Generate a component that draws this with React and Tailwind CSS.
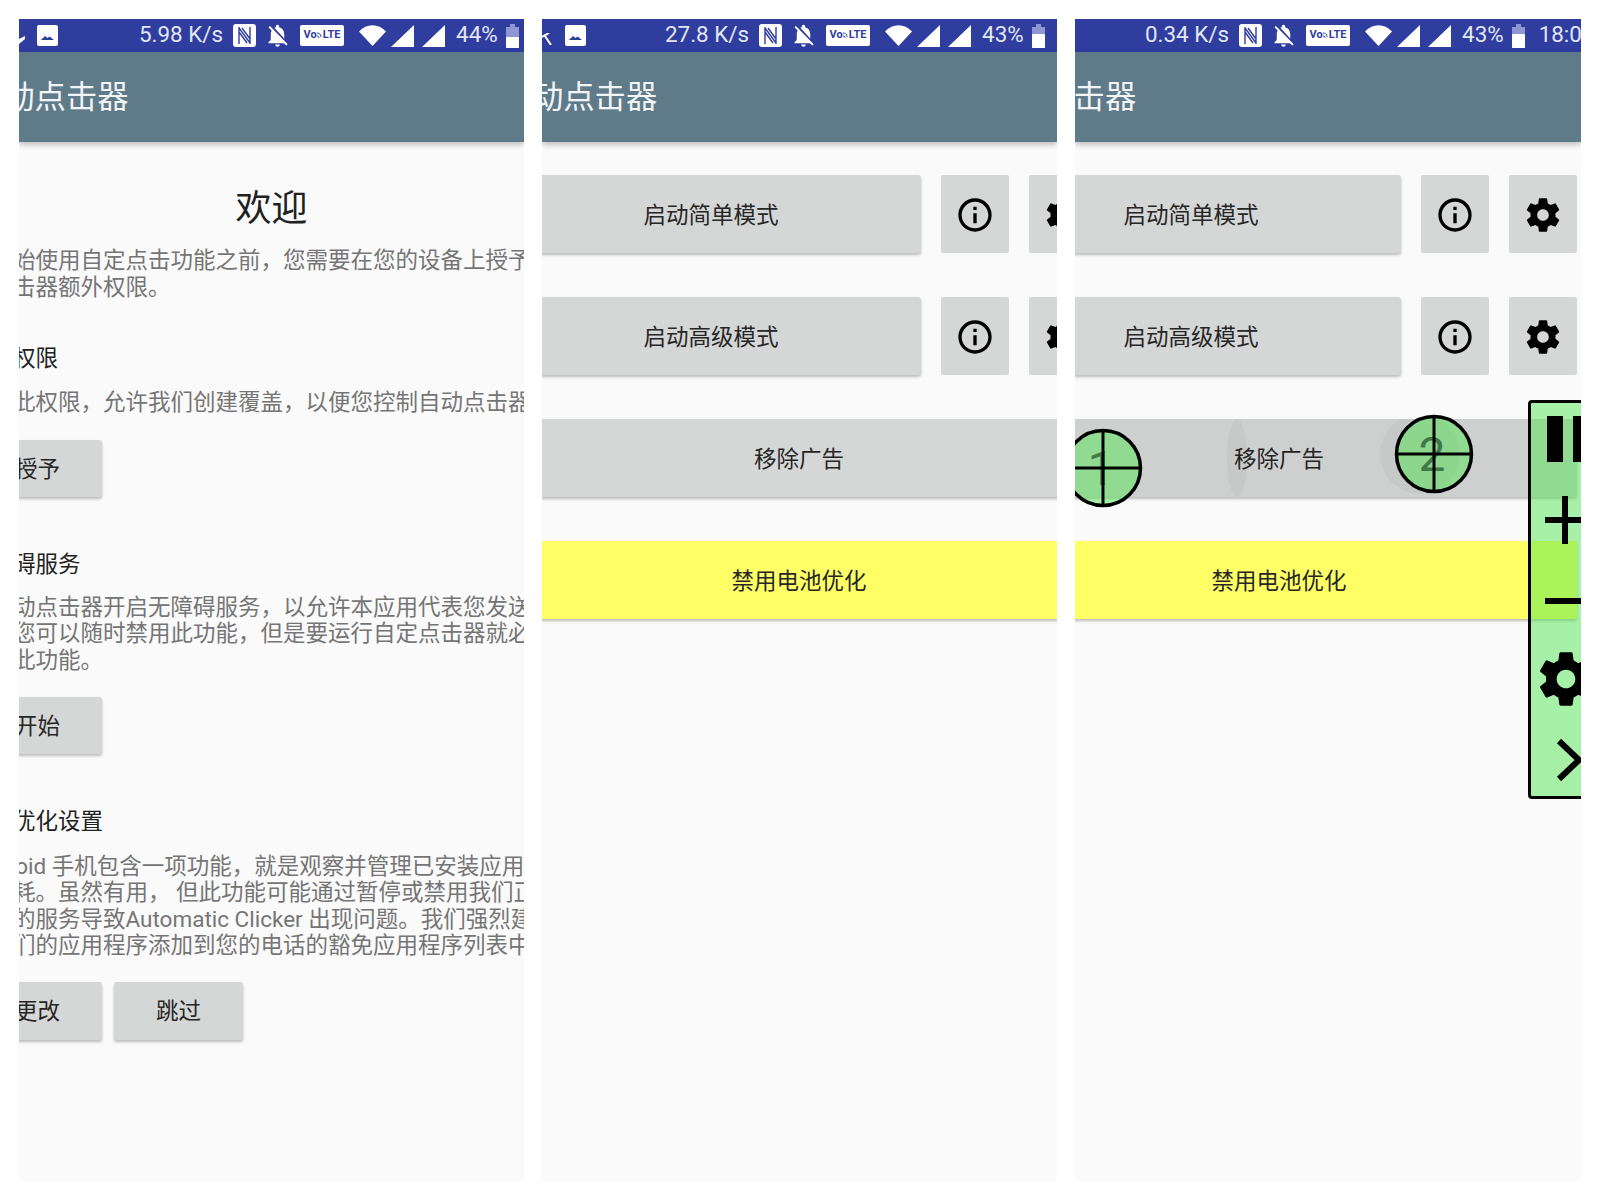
import React from "react";

const GEAR =
    "M19.43 12.98c.04-.32.07-.64.07-.98s-.03-.66-.07-.98l2.11-1.65c.19-.15.24-.42.12-.64l-2-3.46c-.12-.22-.39-.3-.61-.22l-2.49 1c-.52-.4-1.08-.73-1.69-.98l-.38-2.65C14.46 2.18 14.25 2 14 2h-4c-.25 0-.46.18-.49.42l-.38 2.65c-.61.25-1.17.59-1.69.98l-2.49-1c-.23-.09-.49 0-.61.22l-2 3.46c-.13.22-.07.49.12.64l2.11 1.65c-.04.32-.07.65-.07.98s.03.66.07.98l-2.11 1.65c-.19.15-.24.42-.12.64l2 3.46c.12.22.39.3.61.22l2.49-1c.52.4 1.08.73 1.69.98l.38 2.65c.03.24.24.42.49.42h4c.25 0 .46-.18.49-.42l.38-2.65c.61-.25 1.17-.59 1.69-.98l2.49 1c.23.09.49 0 .61-.22l2-3.46c.12-.22.07-.49-.12-.64l-2.11-1.65zM12 15.5c-1.93 0-3.5-1.57-3.5-3.5s1.57-3.5 3.5-3.5 3.5 1.57 3.5 3.5-1.57 3.5-3.5 3.5z";
const INFO =
    "M11 7h2v2h-2zm0 4h2v6h-2zm1-9C6.48 2 2 6.48 2 12s4.48 10 10 10 10-4.48 10-10S17.52 2 12 2zm0 18c-4.41 0-8-3.59-8-8s3.59-8 8-8 8 3.59 8 8-3.59 8-8 8z";
const BELL_OFF =
    "M20 18.69L7.84 6.14 5.27 3.49 4 4.76l2.8 2.8v.01c-.52.99-.8 2.16-.8 3.42v5l-2 2v1h13.73l2 2L21 19.72l-1-1.03zM12 22c1.11 0 2-.89 2-2h-4c0 1.11.89 2 2 2zm6-7.32V11c0-3.08-1.64-5.64-4.5-6.32V4c0-.83-.67-1.5-1.5-1.5s-1.5.67-1.5 1.5v.68c-.15.03-.29.08-.42.12-.1.03-.2.07-.3.11h-.01c-.2.08-.4.17-.59.27-.01 0-.01 0-.02.01L18 14.68z";

const Icon = ({ d, size = 40 }) => (
    <svg width={size} height={size} viewBox="0 0 24 24" fill="currentColor">
        <path d={d} />
    </svg>
);

const PictureIcon = () => (
    <svg width="21" height="21" viewBox="0 0 21 21" className="shrink-0">
        <rect width="21" height="21" rx="2" fill="#fff" />
        <path d="M4 15l4-4 2.5 2 2-1.500 4.500 3.500z" fill="#2e3d9e" />
    </svg>
);

const NfcIcon = () => (
    <svg width="23" height="23" viewBox="0 0 23 23" className="shrink-0 ml-[10px]">
        <rect width="23" height="23" rx="3" fill="#fff" />
        <path d="M6 3v17M17 3v17M6 4l11 15M9 4l8 11M6 8l8 11" fill="none" stroke="#2e3d9e" strokeWidth="1.400" />
    </svg>
);

const Wifi = () => (
    <svg width="27" height="21" viewBox="0 0 27 21" className="shrink-0 ml-[15px]">
        <path d="M13.5 21L0 6.5C8-2 19-2 27 6.5z" fill="#fff" />
    </svg>
);

const Signal = ({ className }) => (
    <svg width="23" height="22" viewBox="0 0 23 22" className={className}>
        <path d="M0 22L23 0v22z" fill="#fff" />
    </svg>
);

const Battery = ({ level }) => (
    <svg width="13" height="24" viewBox="0 0 13 24" className="shrink-0 ml-[8px]">
        <path d="M4 0h5v3h4v21H0V3h4z" fill="#8f96d2" />
        <rect y={level} width="13" height={24 - level} rx="1" fill="#fff" />
    </svg>
);

const VolteBadge = () => (
    <span className="shrink-0 ml-[9px] w-[44px] h-[21px] bg-white rounded-[2px] text-[#2e3d9e] text-[11px] font-bold flex items-center justify-center">
        <span>Vo</span>
        <svg width="5" height="9" viewBox="0 0 5 9" className="mb-[3px] mr-[1px]">
            <path d="M0 3c2 0 4 1 4 4M0 6c1 0 2 .5 2 2" fill="none" stroke="#2e3d9e" strokeWidth="1" />
        </svg>
        <span>LTE</span>
    </span>
);

const StatusBar = ({ speed, percent, left, clock, level = 13 }) => (
    <div className="h-[33px] shrink-0 bg-[#2e3d9e] flex items-center text-[#e3e6f6] text-[22.4px] whitespace-nowrap">
        {left}
        <span className="mb-[2px]">{speed}</span>
        <NfcIcon />
        <span className="shrink-0 ml-[8px] text-white">
            <Icon d={BELL_OFF} size={27} />
        </span>
        <VolteBadge />
        <Wifi />
        <Signal className="shrink-0 ml-[5px]" />
        <Signal className="shrink-0 ml-[8px]" />
        <span className="ml-[11px] mb-[2px]">{percent}</span>
        <Battery level={level} />
        {clock && <span className="ml-[14px] mb-[2px]">{clock}</span>}
    </div>
);

const Toolbar = ({ title, offset }) => (
    <div className="h-[90px] shrink-0 bg-[#5f7a89] flex items-center text-[31.3px] text-[#f2f5f6] whitespace-nowrap shadow-[0_3px_5px_rgba(0,0,0,0.22)] relative">
        <span className={`pt-[3px] ${offset}`}>{title}</span>
    </div>
);

const Panel = ({ className, children }) => (
    <div className={`h-[1162px] shrink-0 bg-[#fafafa] overflow-hidden relative flex flex-col ${className}`}>
        {children}
    </div>
);

const GrayButton = ({ children, className = "" }) => (
    <div className={`bg-[#d5d7d7] rounded-[3px] shadow-[0_2px_3px_rgba(0,0,0,0.25)] flex items-center justify-center pt-[2px] text-[22.5px] text-[#262626] ${className}`}>
        {children}
    </div>
);

const IconButton = ({ d }) => (
    <div className="w-[68px] bg-[#d5d7d7] rounded-[2px] flex items-center justify-center pt-[2px] text-black">
        <Icon d={d} />
    </div>
);

const Para = ({ lines, className = "" }) => (
    <div className={`text-[22.5px] leading-[26.5px] text-[#757575] whitespace-nowrap ${className}`}>
        {lines.map((line) => (
            <div key={line}>{line}</div>
        ))}
    </div>
);

const Heading = ({ children, className = "" }) => (
    <div className={`text-[22.5px] leading-[26.5px] text-[#212121] whitespace-nowrap ${className}`}>{children}</div>
);

const ModeRow = ({ label }) => (
    <div className="flex gap-5 h-[78px] w-[596px]">
        <GrayButton className="w-[420px] pt-[4px]">{label}</GrayButton>
        <IconButton d={INFO} />
        <IconButton d={GEAR} />
    </div>
);

const MainList = ({ offset, ripples }) => (
    <div className={`flex flex-col gap-[44px] pt-[33px] w-[596px] ${offset}`}>
        <ModeRow label="启动简单模式" />
        <ModeRow label="启动高级模式" />
        <GrayButton className="h-[78px] pt-[4px] relative overflow-hidden">
            {ripples}
            移除广告
        </GrayButton>
        <GrayButton className="h-[78px] pt-[4px] bg-[#ffff66] text-[#222]">禁用电池优化</GrayButton>
    </div>
);

// one of the two tap targets floating over the app
const Marker = ({ n, className }) => (
    <svg width="80" height="80" viewBox="0 0 80 80" className={`absolute ${className}`}>
        <circle cx="40" cy="40" r="37.5" fill="#4be54b" fillOpacity="0.47" />
        <text x="38" y="57" textAnchor="middle" fontSize="48" fontFamily="Roboto, sans-serif" fill="#1c4f2c" fillOpacity="0.7">
            {n}
        </text>
        <path d="M40 3v74M3 40h74" stroke="#000" strokeWidth="3" />
        <circle cx="40" cy="40" r="37.5" fill="none" stroke="#000" strokeWidth="3.5" />
    </svg>
);

const FloatingMenu = () => (
    <div className="absolute left-[453px] top-[381px] w-[90px] h-[399px] bg-[#4be54b]/47 border-[3px] border-black rounded-[4px] flex flex-col">
        <svg width="78" height="78" viewBox="0 0 78 78">
            <path d="M16 13h16v46H16zM42 13h16v46H42z" fill="#000" />
        </svg>
        <svg width="78" height="78" viewBox="0 0 78 78">
            <path d="M34 15v48M14 39h50" stroke="#000" strokeWidth="6" />
        </svg>
        <svg width="78" height="78" viewBox="0 0 78 78">
            <path d="M14 42h44" stroke="#000" strokeWidth="6" />
        </svg>
        <svg width="78" height="78" viewBox="0 0 78 78">
            <svg x="3" y="10" width="64" height="64" viewBox="0 0 24 24">
                <path d={GEAR} fill="#000" />
            </svg>
        </svg>
        <svg width="78" height="78" viewBox="0 0 78 78">
            <path d="M28 26l20 19-20 19" fill="none" stroke="#000" strokeWidth="6" />
        </svg>
    </div>
);

const App = () => {
    return (
        <div className="min-h-[1200px] bg-white flex gap-[18px] pt-[19px] pl-[19px] font-['Roboto','Noto_Sans_CJK_SC',sans-serif]">
            {/* LEFT: permissions screen */}
            <Panel className="w-[505px]">
                <StatusBar
                    speed="5.98 K/s"
                    percent="44%"
                    left={
                        <>
                            <svg width="6" height="8" viewBox="0 0 6 8" className="shrink-0 mt-[8px] mr-[12px]">
                                <path d="M0 8V3l6-3v3z" fill="#fff" />
                            </svg>
                            <PictureIcon />
                            <span className="w-[81px] shrink-0" />
                        </>
                    }
                />
                <Toolbar title="自动点击器" offset="ml-[-47px]" />
                <div className="mt-[47px] text-[36px] leading-[40px] text-[#212121] text-center">欢迎</div>
                <div className="ml-[-51px] flex flex-col">
                    <Para
                        className="mt-[18px]"
                        lines={["在开始使用自定点击功能之前，您需要在您的设备上授予", "动点击器额外权限。"]}
                    />
                    <Heading className="mt-[45px]">覆盖权限</Heading>
                    <Para className="mt-[17px]" lines={["授予此权限，允许我们创建覆盖，以便您控制自动点击器"]} />
                    <GrayButton className="mt-[25px] ml-[5px] w-[129px] h-[57px]">授予</GrayButton>
                    <Heading className="mt-[54px]">无障碍服务</Heading>
                    <Para
                        className="mt-[16px]"
                        lines={[
                            "为自动点击器开启无障碍服务，以允许本应用代表您发送",
                            "作。您可以随时禁用此功能，但是要运行自定点击器就必须",
                            "禁用此功能。",
                        ]}
                    />
                    <GrayButton className="mt-[24px] ml-[5px] w-[129px] h-[57px]">开始</GrayButton>
                    <Heading className="mt-[54px]">电池优化设置</Heading>
                    <Para
                        className="mt-[18px]"
                        lines={[
                            "Android 手机包含一项功能，就是观察并管理已安装应用",
                            "的消耗。虽然有用， 但此功能可能通过暂停或禁用我们正",
                            "运行的服务导致Automatic Clicker 出现问题。我们强烈建议",
                            "将我们的应用程序添加到您的电话的豁免应用程序列表中",
                        ]}
                    />
                    <div className="flex gap-3 mt-[23px] ml-[5px]">
                        <GrayButton className="w-[129px] h-[58px]">更改</GrayButton>
                        <GrayButton className="w-[129px] h-[58px]">跳过</GrayButton>
                    </div>
                </div>
            </Panel>

            {/* MIDDLE: main screen */}
            <Panel className="w-[515px]">
                <StatusBar
                    speed="27.8 K/s"
                    percent="43%"
                    level={10}
                    left={
                        <>
                            <svg width="10" height="12" viewBox="0 0 10 12" className="shrink-0 mt-[6px] mr-[13px]">
                                <path d="M0 4l7-4M3 3l6 9" fill="none" stroke="#fff" strokeWidth="2" />
                            </svg>
                            <PictureIcon />
                            <span className="w-[79px] shrink-0" />
                        </>
                    }
                />
                <Toolbar title="动点击器" offset="ml-[-10px]" />
                <MainList offset="ml-[-41px]" />
            </Panel>

            {/* RIGHT: main screen with the floating controls on top */}
            <Panel className="w-[506px]">
                <StatusBar
                    speed="0.34 K/s"
                    percent="43%"
                    level={10}
                    clock="18:00"
                    left={<span className="w-[70px] shrink-0" />}
                />
                <Toolbar title="动点击器" offset="ml-[-64px]" />
                <MainList
                    offset="ml-[-94px]"
                    ripples={
                        <>
                            <span className="absolute inset-0 bg-black/[0.03]" />
                            <span className="absolute left-[246px] top-0 w-[20px] h-[78px] rounded-[50%] bg-black/[0.03]" />
                            <span className="absolute left-[399px] top-[-5px] w-[80px] h-[80px] rounded-full bg-black/[0.03]" />
                        </>
                    }
                />
                <Marker n="1" className="left-[-12px] top-[409px]" />
                <Marker n="2" className="left-[319px] top-[395px]" />
                <FloatingMenu />
            </Panel>
        </div>
    );
};

export default App;
